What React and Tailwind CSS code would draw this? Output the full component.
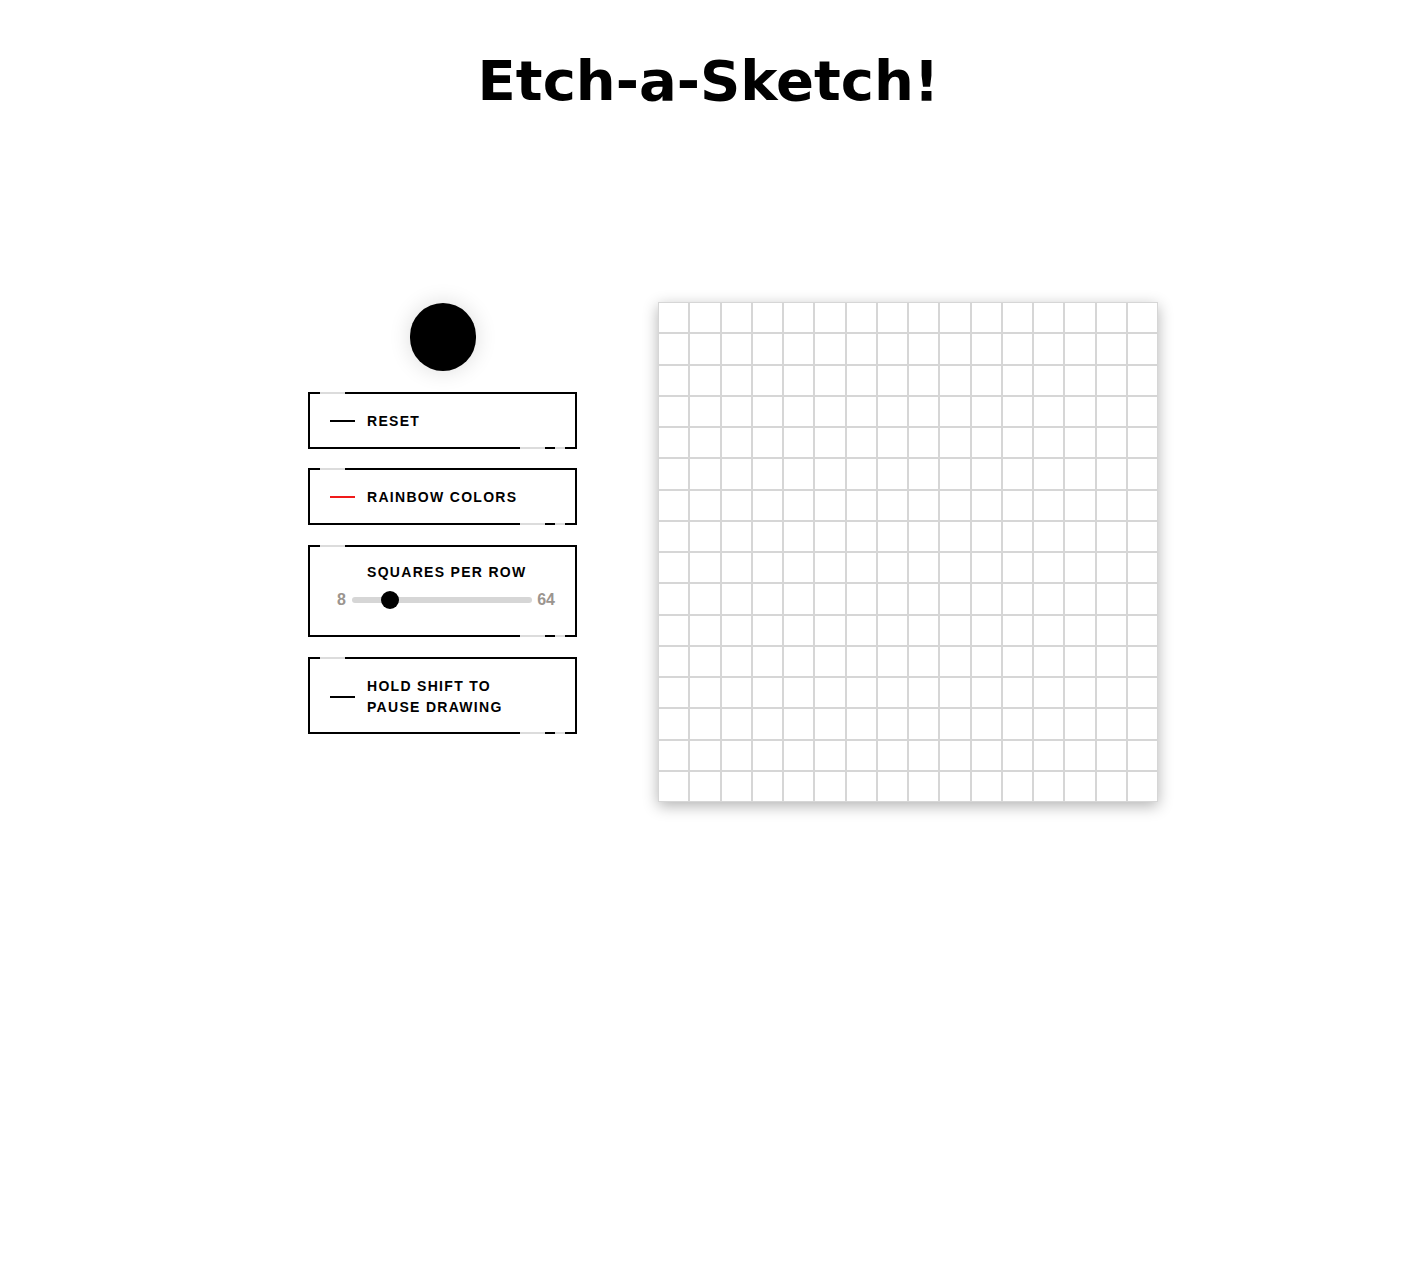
import React, { useState } from "react";

const Panel = ({ children, className = "" }) => {
  return (
    <div
      className={`relative w-[269px] border-2 border-black bg-white px-[20px] ${className}`}
    >
      {/* little gaps in the frame */}
      <span className="absolute -top-[2px] left-[10px] h-[2px] w-[25px] bg-[#dcdcdc]" />
      <span className="absolute -bottom-[2px] right-[30px] h-[2px] w-[25px] bg-[#dcdcdc]" />
      <span className="absolute -bottom-[2px] right-[10px] h-[2px] w-[10px] bg-[#dcdcdc]" />
      {children}
    </div>
  );
};

const Dash = ({ color = "bg-black" }) => (
  <span className={`block h-[2px] w-[25px] shrink-0 ${color}`} />
);

const App = () => {
  const [slider, setSlider] = useState(18);
  const size = 16;

  const cells = Array.from({ length: size * size });

  return (
    <div className="min-h-screen bg-white font-['Liberation_Sans',Arial,sans-serif] text-black">
      <h1 className="pt-[46px] pl-[9px] text-center font-['DejaVu_Sans',sans-serif] text-[56px] font-bold leading-[70px]">
        Etch-a-Sketch!
      </h1>

      <div className="mt-[186px] flex items-start justify-center gap-[81px] pl-[58px]">
        <div className="flex w-[269px] flex-col items-center">
          <div className="mt-[1px] h-[68px] w-[66px] rounded-full bg-black shadow-[0_0_22px_rgba(0,0,0,0.14)]" />

          <div className="mt-[21px] flex flex-col">
            <Panel className="flex h-[57px] items-center">
              <button className="flex items-center gap-[12px] text-[14px] font-bold uppercase leading-[20px] tracking-[1.3px]">
                <Dash />
                Reset
              </button>
            </Panel>

            <Panel className="mt-[19px] flex h-[57px] items-center">
              <button className="flex items-center gap-[12px] text-[14px] font-bold uppercase leading-[20px] tracking-[1.3px]">
                <Dash color="bg-[#f01a1a]" />
                Rainbow colors
              </button>
            </Panel>

            <Panel className="mt-[20px] h-[92px] pt-[15px]">
              <div className="pl-[37px] text-[14px] font-bold uppercase leading-[20px] tracking-[1.3px]">
                Squares per row
              </div>
              <div className="mt-[7px] ml-[7px] flex h-[22px] items-center gap-[6px] text-[16px] font-bold text-[#9b958f]">
                <span>8</span>
                <input
                  type="range"
                  min="8"
                  max="64"
                  value={slider}
                  onChange={(e) => setSlider(Number(e.target.value))}
                  className="h-[6px] w-[182px] cursor-pointer appearance-none rounded-full bg-[#d6d6d6] outline-none [&::-webkit-slider-thumb]:h-[18px] [&::-webkit-slider-thumb]:w-[18px] [&::-webkit-slider-thumb]:appearance-none [&::-webkit-slider-thumb]:rounded-full [&::-webkit-slider-thumb]:bg-black [&::-moz-range-thumb]:h-[18px] [&::-moz-range-thumb]:w-[18px] [&::-moz-range-thumb]:rounded-full [&::-moz-range-thumb]:border-0 [&::-moz-range-thumb]:bg-black"
                />
                <span className="-ml-[1px]">64</span>
              </div>
            </Panel>

            <Panel className="mt-[20px] flex h-[77px] items-center pt-[3px]">
              <div className="flex items-center gap-[12px] text-[14px] font-bold uppercase leading-[21px] tracking-[1.3px]">
                <Dash />
                <span>
                  Hold shift to
                  <br />
                  pause drawing
                </span>
              </div>
            </Panel>
          </div>
        </div>

        <div
          className="grid h-[500px] w-[500px] bg-white shadow-[0_4px_14px_rgba(0,0,0,0.3)]"
          style={{
            gridTemplateColumns: `repeat(${size}, 1fr)`,
            gridTemplateRows: `repeat(${size}, 1fr)`,
          }}
        >
          {cells.map((_, i) => (
            <div key={i} className="border border-[#d6d6d6] bg-white" />
          ))}
        </div>
      </div>
    </div>
  );
};

export default App;
